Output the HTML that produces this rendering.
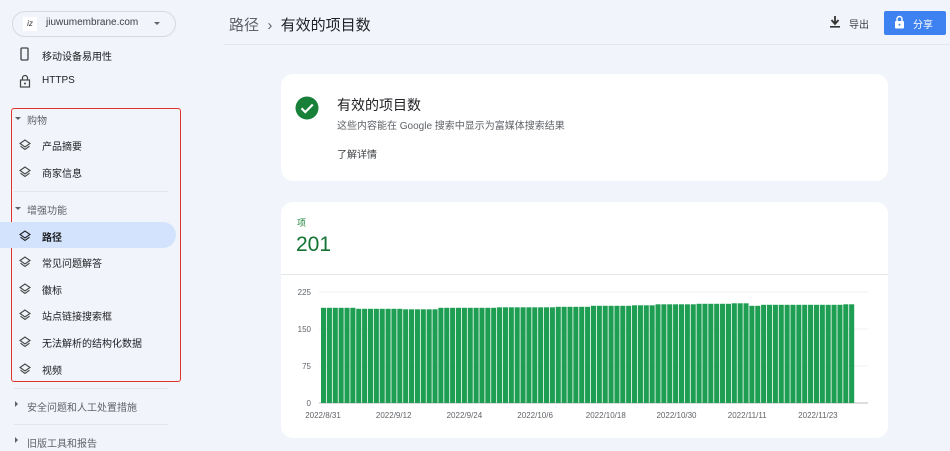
<!DOCTYPE html>
<html><head><meta charset="utf-8"><style>
*{margin:0;padding:0;box-sizing:border-box}
body{width:950px;height:451px;overflow:hidden;background:#f1f4fa;font-family:"Liberation Sans","Noto Sans CJK SC",sans-serif;position:relative;color:#202124}
.a{position:absolute}
.it{position:absolute;left:42px;font-size:10px;color:#202124}
.ic{position:absolute;left:19px}
.sec{position:absolute;left:27px;font-size:10px;color:#5f6368}
.tri{position:absolute;left:15px;width:0;height:0}
.hr{position:absolute;left:14px;width:154px;height:1px;background:#e1e4ea}
</style></head><body>
<!-- sidebar -->
<div class="a" style="left:12px;top:11px;width:164px;height:26px;border:1px solid #d5d9e0;border-radius:13px;background:#f1f4fa"></div>
<div class="a" style="left:23px;top:17px;width:14px;height:14px;background:#fff;font-size:8px;color:#333;text-align:center;line-height:14px;font-style:italic">iz</div>
<div class="a" style="left:46px;top:17px;font-size:10px;color:#3c4043">jiuwumembrane.com</div>
<div class="tri" style="left:154px;top:22px;border-left:3px solid transparent;border-right:3px solid transparent;border-top:3px solid #5f6368"></div>
<svg class="ic" style="top:47px" width="12" height="14"><rect x="2" y="1" width="7" height="12" rx="1" fill="none" stroke="#444" stroke-width="1.3"/></svg>
<div class="it" style="top:48px">移动设备易用性</div>
<svg class="ic" style="top:74px" width="12" height="14"><path d="M3.5 6V4a2.5 2.5 0 015 0v2" fill="none" stroke="#444" stroke-width="1.2"/><rect x="1.5" y="6" width="9" height="7" fill="none" stroke="#444" stroke-width="1.2"/><circle cx="6" cy="9.5" r="1" fill="#444"/></svg>
<div class="it" style="top:75px">HTTPS</div>

<div class="a" style="left:11px;top:108px;width:170px;height:274px;border:1.5px solid #e0352b;border-radius:3px"></div>
<div class="tri" style="top:117px;border-left:3px solid transparent;border-right:3px solid transparent;border-top:3px solid #5f6368"></div>
<div class="sec" style="top:112px">购物</div>
<div class="a" style="left:0;top:222px;width:176px;height:26px;background:#d3e3fd;border-radius:0 13px 13px 0"></div>
<div class="hr" style="top:191px"></div>
<div class="tri" style="top:207px;border-left:3px solid transparent;border-right:3px solid transparent;border-top:3px solid #5f6368"></div>
<div class="sec" style="top:202px">增强功能</div>

<div id="layers"></div>
<div class="hr" style="top:388px"></div>
<div class="tri" style="top:401px;border-top:3px solid transparent;border-bottom:3px solid transparent;border-left:3px solid #5f6368"></div>
<div class="sec" style="top:399px">安全问题和人工处置措施</div>
<div class="hr" style="top:424px"></div>
<div class="tri" style="top:437px;border-top:3px solid transparent;border-bottom:3px solid transparent;border-left:3px solid #5f6368"></div>
<div class="sec" style="top:435px">旧版工具和报告</div>

<!-- header -->
<div class="a" style="left:224px;top:44px;width:726px;height:1px;background:#e3e6eb"></div>
<div class="a" style="left:229px;top:14px;font-size:15px;color:#5f6368">路径 &nbsp;›&nbsp; <span style="color:#202124">有效的项目数</span></div>
<svg class="a" style="left:829px;top:15px" width="12" height="14"><path d="M6 1v7M2.5 5l3.5 4 3.5-4" fill="none" stroke="#333" stroke-width="1.8"/><rect x="1" y="11" width="10" height="1.6" fill="#333"/></svg>
<div class="a" style="left:849px;top:16px;font-size:10px;color:#3c4043">导出</div>
<div class="a" style="left:884px;top:11px;width:62px;height:24px;background:#3d82f0;border-radius:2px"></div>
<svg class="a" style="left:894px;top:15px" width="11" height="14"><path d="M3 6V4a2.5 2.5 0 015 0v2" fill="none" stroke="#fff" stroke-width="1.4"/><rect x="1" y="6" width="9" height="7.5" rx="1" fill="#fff"/><circle cx="5.5" cy="9.8" r="1" fill="#3d82f0"/></svg>
<div class="a" style="left:913px;top:16px;font-size:10px;color:#fff">分享</div>

<!-- card 1 -->
<div class="a" style="left:281px;top:74px;width:607px;height:107px;background:#fff;border-radius:12px"></div>
<svg class="a" style="left:295px;top:96px" width="24" height="24"><circle cx="12" cy="12" r="11.5" fill="#188038"/><path d="M6.5 12.3l3.8 3.8 7.5-7.6" fill="none" stroke="#fff" stroke-width="2.2"/></svg>
<div class="a" style="left:337px;top:95px;font-size:14px;color:#202124">有效的项目数</div>
<div class="a" style="left:337px;top:117px;font-size:10px;color:#5f6368">这些内容能在 Google 搜索中显示为富媒体搜索结果</div>
<div class="a" style="left:337px;top:146px;font-size:10px;color:#3c4043">了解详情</div>

<!-- card 2 -->
<div class="a" style="left:281px;top:202px;width:607px;height:236px;background:#fff;border-radius:12px"></div>
<div class="a" style="left:281px;top:274px;width:607px;height:1px;background:#e3e6eb"></div>
<div class="a" style="left:297px;top:216px;font-size:9px;color:#188038">项</div>
<div class="a" style="left:296px;top:233px;font-size:21px;color:#137333">201</div>
<svg class="a" id="ch" style="left:281px;top:280px" width="607" height="150" font-family="Liberation Sans" font-size="8" fill="#5f6368"></svg>

<script>
var L=document.getElementById('layers'),h='';
[['产品摘要',138],['商家信息',165],['路径',229,1],['常见问题解答',255],['徽标',282],['站点链接搜索框',308],['无法解析的结构化数据',335],['视频',362]].forEach(function(a){
var c=a[2]?'#202124':'#444';
h+='<svg class="ic" style="top:'+(a[1]+1)+'px" width="12" height="12"><path d="M6 1L1 4.5 6 8 11 4.5Z" fill="none" stroke="'+c+'" stroke-width="1.1"/><path d="M1.5 7.2L6 10.5 10.5 7.2" fill="none" stroke="'+c+'" stroke-width="1.1"/></svg><div class="it" style="top:'+a[1]+'px;'+(a[2]?'font-weight:bold':'')+'">'+a[0]+'</div>';});
L.innerHTML=h;
var s='',x0=40,x1=574,y0=123,sc=111/225;
[[225,12],[150,49],[75,86],[0,123]].forEach(function(t){s+='<line x1="38" x2="587" y1="'+t[1]+'" y2="'+t[1]+'" stroke="'+(t[0]?'#f1f1f1':'#bbb')+'"/><text x="30" y="'+(t[1]+3)+'" text-anchor="end">'+t[0]+'</text>';});
var n=91,w=(x1-x0)/n;
for(var i=0;i<n;i++){var v;
if(i<6)v=193;else if(i<14)v=191;else if(i<20)v=190;else if(i<30)v=193;else if(i<40)v=194;else if(i<46)v=195;else if(i<53)v=197;else if(i<57)v=198;else if(i<64)v=200;else if(i<70)v=201;else if(i<73)v=202;else if(i<75)v=197;else if(i<89)v=199;else v=200;
var hh=v*sc;s+='<rect x="'+(x0+i*w).toFixed(2)+'" y="'+(y0-hh).toFixed(1)+'" width="'+(w-0.8).toFixed(2)+'" height="'+hh.toFixed(1)+'" fill="#1e9e52"/>';}
['2022/8/31','2022/9/12','2022/9/24','2022/10/6','2022/10/18','2022/10/30','2022/11/11','2022/11/23'].forEach(function(d,k){s+='<text x="'+(42+k*70.7)+'" y="138" text-anchor="middle">'+d+'</text>';});
document.getElementById('ch').innerHTML=s;
</script>
</body></html>
